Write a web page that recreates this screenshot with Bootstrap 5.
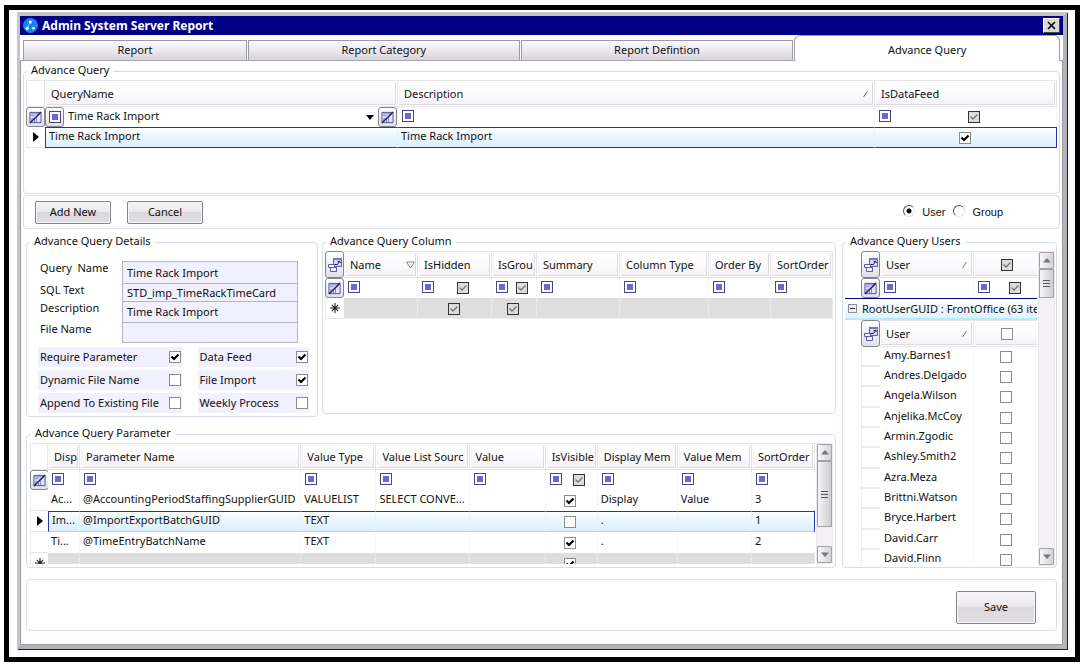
<!DOCTYPE html>
<html lang="en">
<head>
<meta charset="utf-8">
<meta name="viewport" content="width=device-width, initial-scale=1">
<title>Admin System Server Report</title>
<link href="https://cdn.jsdelivr.net/npm/bootstrap@5.3.0/dist/css/bootstrap.min.css" rel="stylesheet">
<style>
:root { --line:#d5deea; --cell:#e6e6e6; --field:#f0f0ff; --navy:#00008b; }
body { font-family:"Noto Sans","Open Sans",sans-serif; font-size:11px; line-height:16px; color:#111; background:#fff; height:100vh; min-height:600px; padding:5px 5px 2px 4px; }
button, input, select { font:inherit; color:inherit; }
.frame { border:5px solid #000; padding:2px 8px 8px 8px; }
.win { border:solid; border-width:4px 4px 4px 3px; border-color:#c6c6ca #b4b4b8 #b4b4b8 #c6c6ca; box-shadow:1px 1px 0 #222, inset 0 0 0 1px #9a9aa2; min-height:0; }
.titlebar { background:#000084; color:#fff; height:19px; font-size:12px; font-weight:700; padding:0 3px; flex:none; }
.closebtn { width:17px; height:15px; background:#dcdad6; border:1px solid; border-color:#fff #444 #444 #fff; line-height:0; padding:0; }
.tabs { height:26px; padding:0 3px; border-bottom:1px solid #a6a6ae; flex:none; background:#fdfcfe; }
.tabs button { height:20px; border:1px solid #9c9ca6; border-bottom:0; background:linear-gradient(#faf8fb,#ece8ee 50%,#d8d4da); padding:0 0 2px; margin-right:1px; }
.tabs .t1 { flex:224 1 0; } .tabs .t2 { flex:272 1 0; } .tabs .t3 { flex:273 1 0; }
.tabs .active { flex:266 1 0; height:26px; background:#fff; border-radius:6px 6px 0 0; padding:2px 0 0; margin:0 0 -1px; align-self:flex-end; }
.client { padding:3px 3px 14px; min-height:0; }
fieldset.box { border:1px solid var(--line); border-radius:4px; min-width:0; }
fieldset.box > legend { float:none; width:auto; font-size:11px; line-height:12px; height:14px; margin:0 0 0 1px; padding:0 4px; }
.bar { border:1px solid var(--line); border-radius:4px; }
.topbox { height:130px; padding:2px 2px 0; flex:none; }
.lower { padding:0 3px; min-height:0; }
.cmd { height:34px; padding:0 8px 0 11px; margin:1px 0 6px; flex:none; }
.pushbtn { border:1px solid #85838a; border-radius:2px; box-shadow:inset 0 0 0 1px #f8f8fa; background:linear-gradient(#f6f4f7,#eceaee 45%,#dbd9de 50%,#e0dee2); width:76px; height:23px; padding:0; line-height:14px; }
.save { width:80px; height:33px; }

/* data grids */
.gt { table-layout:fixed; border-collapse:separate; border-spacing:0; width:100%; }
.gt th, .gt td { padding:0; overflow:hidden; white-space:nowrap; font-weight:400; }
.gt td { border-right:1px dotted #ececec; padding-left:3px; line-height:16px; vertical-align:top; text-overflow:ellipsis; }
.gt thead th { height:27px; border:1px solid var(--cell); border-left:0; padding:1px; background:#fff; }
.gt thead th:first-child { border-left:1px solid var(--cell); }
.hd { height:23px; line-height:21px; padding-left:4px; background:linear-gradient(#fff,#fcfbfd 50%,#f5f2f8); border:1px solid; border-color:#f8f8fa #dedae2 #dedae2 #f4f4f6; overflow:hidden; }
.gt .flt td { height:20px; vertical-align:middle; padding-left:4px; }
.gt .flt .op { margin-bottom:2px; }
.gt .dat td { height:21px; padding-top:1px; }
.gt td.sel, .gt .flt td.sel { padding:0; border:0; border-bottom:1px solid #e4e4e4; border-left:1px solid #ececec; text-align:center; vertical-align:middle; line-height:0; text-overflow:clip; }
.gt .flt td.sel { border:0; }
.gt .cur td:not(.sel) { border-top:1px solid #2438a8; border-bottom:1px solid #2438a8; background:linear-gradient(#fff,#eef8ff 35%,#d9effd); padding-top:0; }
.gt .cur td.sel + td { border-left:1px solid #2438a8; }
.gt .cur td:last-child { border-right:1px solid #2438a8; }
.gt .cur.soft td:not(.sel) { border-bottom-color:#9fd8f6; }
.gt .new td:not(.sel) { background:#dedede; border-right-color:#f4f4f4; border-bottom:1px solid #eee; }
.icobtn { width:19px; height:20px; padding:0; border:1px solid #85858c; border-radius:3px; background:linear-gradient(#fff,#e2e0e6); line-height:0; display:flex; align-items:center; justify-content:center; flex:none; }
.tallbtn { height:27px; }
.gt thead th.corner { padding:0; border:0; }
.op { width:12px; height:12px; border:1px solid #46468c; padding:2px; background:linear-gradient(#6868d6,#6868d6) content-box,#fff; flex:none; display:block; }
.ck { appearance:none; width:12px; height:12px; margin:0; border:1px solid #8c8c8c; background:#fff center/10px 10px no-repeat; display:block; flex:none; border-radius:0; }
.ck:checked { background-image:url("data:image/svg+xml,%3Csvg xmlns='http://www.w3.org/2000/svg' viewBox='0 0 10 10'%3E%3Cpath d='M1.5 4.5 4 7 8.5 2.5' fill='none' stroke='%23000' stroke-width='2.2'/%3E%3C/svg%3E"); }
.ck.mid { border-color:#333; background-color:#dcdcdc; }
.ck.mid:checked { background-image:url("data:image/svg+xml,%3Csvg xmlns='http://www.w3.org/2000/svg' viewBox='0 0 10 10'%3E%3Cpath d='M1.5 4.5 4 7 8.5 2.5' fill='none' stroke='%23777' stroke-width='1.4'/%3E%3C/svg%3E"); }
.combo { appearance:none; border:0; background:transparent; padding:0; outline:0; min-width:0; line-height:16px; height:20px; padding-bottom:3px; }
.cc { display:flex; justify-content:center; align-items:center; height:19px; padding-right:5px; }
.fpair { display:flex; align-items:center; height:18px; }
.fpair .ck { margin:0 auto; }

/* column widths */
.c18{width:18px}.c19{width:19px}.c32{width:32px}.c45{width:45px}.c52{width:52px}.c62{width:62px}.c63{width:63px}.c66{width:66px}.c74{width:74px}.c75{width:75px}.c76{width:76px}.c80{width:80px}.c83{width:83px}.c89{width:89px}.c93{width:93px}.c94{width:94px}.c182{width:182px}.c221{width:221px}.c353{width:353px}.c477{width:477px}

/* details */
.details { width:292px; flex:none; padding:12px 8px 3px 11px; }
fieldset.details > legend { margin-left:-8px; }
.fields { display:grid; grid-template-columns:82px 1fr; grid-template-rows:22px 18px 21px 21px; margin:0 11px 4px 2px; }
.fields label { line-height:14px; }
.fields input { border:1px solid #b4b4c6; border-bottom:0; background:var(--field); padding:0 4px; min-width:0; border-radius:0; width:100%; line-height:14px; }
.fields input:last-child { border-bottom:1px solid #b4b4c6; }
.flags { display:grid; grid-template-columns:143fr 111fr; gap:3px 16px; }
.flags label { background:var(--field); height:20px; line-height:18px; display:flex; align-items:center; justify-content:space-between; padding:0 1px 0 2px; white-space:nowrap; }
.columns { padding:2px; margin-bottom:3px; }
.params { height:141px; padding:2px 2px 1px 3px; margin-top:10px; flex:none; }
.users { width:215px; flex:none; padding:2px 1px 1px 2px; margin-left:6px; }
.clip { overflow:hidden; min-height:0; min-width:0; }
.users .inner { height:100%; min-height:0; }
.params .inner { height:121px; }
.indent { margin-left:16px; }
.grp { border-top:1px solid var(--navy); border-bottom:2px solid #b5eafa; background:linear-gradient(#fff,#dff3fe); height:22px; white-space:nowrap; overflow:hidden; padding-left:3px; }
.grp button { width:9px; height:9px; border:1px solid #8a8aa0; background:#eee; padding:0; line-height:0; flex:none; margin-right:5px; }
.gt.people td { padding-left:4px; }
.gt.people tbody td { height:20px; padding-top:0; }
.gt.people tbody tr:nth-child(3n) td { height:21px; }
.gt.people td.sel { border-bottom:2px solid #ececec; }

/* scroll bars */
.sb { width:17px; flex:none; background:#f4f1f6; border:1px solid #ece8ee; margin-left:1px; }
.sb button { height:17px; width:100%; border:1px solid #a4a2a8; border-radius:1px; background:linear-gradient(90deg,#f8f8f9,#d4d2d6); padding:0; line-height:0; flex:none; display:flex; align-items:center; justify-content:center; }
.sb .thumb { border:1px solid #a4a2a8; background:linear-gradient(90deg,#f4f4f5,#cfcdd2); display:flex; align-items:center; justify-content:center; }
.sb .t65 { height:66px; } .sb .t29 { height:29px; }

.rad { font-family:"Liberation Sans",Arial,sans-serif; }
.rad input { appearance:none; width:12px; height:12px; border-radius:50%; border:1px solid; border-color:#555 #e4e4e4 #e4e4e4 #555; margin:0 7px 2px 0; background:#fff; }
.rad input:checked { background:radial-gradient(circle,#000 2px,#fff 3px); }
.foot { height:52px; margin:11px 3px 0; padding:4px 20px 0 0; flex:none; }
</style>
</head>
<body>
<svg width="0" height="0" class="d-none">
  <symbol id="funnel" viewBox="0 0 14 14"><path d="M1 1.500h12v11H1z" fill="#e4e4fa" stroke="#4c4c9a"/><path d="M2 3h10L8 7v5M2 5h4M3 12V8l3 1v3" fill="none" stroke="#7a7ad2"/><path d="M1 13 13 1" stroke="#22225e" stroke-width="1.500"/></symbol>
  <symbol id="chooser" viewBox="0 0 16 16"><path d="M6.500 1.500h8v8h-8z" fill="#d8d8f4" stroke="#5a5ab0"/><path d="M6 1h9v2H6z" fill="#7272c8"/><path d="M1.500 7.500h6v3h-6zM3.500 10.500h6v4h-6z" fill="#f4f4ff" stroke="#5a5ab0"/><path d="M7.500 7.500h3l2-3M10.500 5l2-1 1 2" fill="none" stroke="#22225e"/></symbol>
  <symbol id="caret" viewBox="0 0 8 8"><path d="M0 2h8L4 7z"/></symbol>
  <symbol id="ptr" viewBox="0 0 6 10"><path d="M0 0l6 5-6 5z"/></symbol>
  <symbol id="star" viewBox="0 0 11 11"><path d="M5.500 0v11M0 5.500h11M2 2l7 7M9 2 2 9" stroke="#222" stroke-width="1.200"/></symbol>
  <symbol id="slash" viewBox="0 0 5 6"><path d="M.5 6 4.500 0" stroke="#777"/></symbol>
  <symbol id="up" viewBox="0 0 8 5"><path d="M0 4.500h8L4 0z" fill="#777"/></symbol>
  <symbol id="down" viewBox="0 0 8 5"><path d="M0 .5h8L4 5z" fill="#777"/></symbol>
  <symbol id="grip" viewBox="0 0 7 9"><path d="M0 1.500h7M0 4.500h7M0 7.500h7" stroke="#555"/></symbol>
</svg>

<div class="frame h-100 d-flex flex-column">
<main class="win flex-fill d-flex flex-column">
  <header class="titlebar d-flex align-items-center">
    <svg width="15" height="15" viewBox="0 0 15 15" class="me-1"><circle cx="7.500" cy="7.500" r="7.500" fill="#1384f4"/><path d="M7 4.500 4.500 10" stroke="#8cc6ff" fill="none"/><circle cx="7.300" cy="4" r="1.500" fill="#fff"/><circle cx="4.200" cy="10.300" r="1.600" fill="#fff"/><circle cx="10.500" cy="10.300" r="1.300" fill="#fff"/></svg>
    <span class="flex-fill">Admin System Server Report</span>
    <button class="closebtn" type="button" aria-label="Close"><svg width="9" height="9" viewBox="0 0 9 9"><path d="M1 1l7 7M8 1 1 8" stroke="#000" stroke-width="1.600"/></svg></button>
  </header>
  <nav class="tabs d-flex align-items-end" role="tablist">
    <button type="button" role="tab" class="t1">Report</button>
    <button type="button" role="tab" class="t2">Report Category</button>
    <button type="button" role="tab" class="t3">Report Defintion</button>
    <button type="button" role="tab" class="active" aria-selected="true">Advance Query</button>
  </nav>

  <div class="client flex-fill d-flex flex-column">
    <fieldset class="box topbox"><legend>Advance Query</legend>
      <table class="gt">
        <colgroup><col class="c19"><col class="c353"><col class="c477"><col class="c182"></colgroup>
        <thead><tr><th></th><th><div class="hd">QueryName</div></th><th><div class="hd d-flex justify-content-between align-items-center pe-1">Description <svg width="5" height="6"><use href="#slash"/></svg></div></th><th><div class="hd">IsDataFeed</div></th></tr></thead>
        <tbody>
        <tr class="flt"><td class="sel"><button class="icobtn" type="button" aria-label="Clear filters"><svg width="13" height="13"><use href="#funnel"/></svg></button></td>
          <td class="p-0"><div class="d-flex align-items-center"><button class="icobtn" type="button" aria-label="Operator"><span class="op m-0"></span></button><select class="combo flex-fill ps-1" aria-label="QueryName filter"><option>Time Rack Import</option></select><svg width="8" height="8" class="me-1"><use href="#caret"/></svg><button class="icobtn" type="button" aria-label="Clear filter"><svg width="13" height="13"><use href="#funnel"/></svg></button></div></td>
          <td><button class="op" type="button" aria-label="Operator"></button></td>
          <td><div class="fpair"><button class="op" type="button" aria-label="Operator"></button><input type="checkbox" class="ck mid" checked aria-label="IsDataFeed filter"></div></td></tr>
        <tr class="dat cur"><td class="sel"><svg width="6" height="10"><use href="#ptr"/></svg></td><td>Time Rack Import</td><td>Time Rack Import</td><td><div class="cc"><input type="checkbox" class="ck" checked aria-label="IsDataFeed"></div></td></tr>
        </tbody>
      </table>
    </fieldset>

    <div class="bar cmd d-flex align-items-center">
      <button class="pushbtn me-3" type="button">Add New</button>
      <button class="pushbtn" type="button">Cancel</button>
      <div class="rad d-flex ms-auto me-5">
        <label class="d-flex align-items-center me-2"><input type="radio" name="who" checked>User</label>
        <label class="d-flex align-items-center"><input type="radio" name="who">Group</label>
      </div>
    </div>

    <div class="lower flex-fill d-flex">
      <div class="flex-fill d-flex flex-column clip">
        <div class="d-flex flex-fill gap-1 clip">
          <fieldset class="box details"><legend>Advance Query Details</legend>
            <div class="fields">
              <label for="qn">Query&nbsp; Name</label><input id="qn" value="Time Rack Import">
              <label for="sq">SQL Text</label><input id="sq" value="STD_imp_TimeRackTimeCard">
              <label for="ds">Description</label><input id="ds" value="Time Rack Import">
              <label for="fn">File Name</label><input id="fn" value="">
            </div>
            <div class="flags">
              <label>Require Parameter <input type="checkbox" class="ck" checked></label>
              <label>Data Feed <input type="checkbox" class="ck" checked></label>
              <label>Dynamic File Name <input type="checkbox" class="ck"></label>
              <label>File Import <input type="checkbox" class="ck" checked></label>
              <label>Append To Existing File <input type="checkbox" class="ck"></label>
              <label>Weekly Process <input type="checkbox" class="ck"></label>
            </div>
          </fieldset>
          <fieldset class="box columns flex-fill"><legend>Advance Query Column</legend>
            <table class="gt">
              <colgroup><col class="c19"><col class="c74"><col class="c74"><col class="c45"><col class="c83"><col class="c89"><col class="c62"><col class="c62"></colgroup>
              <thead><tr><th class="corner"><button class="icobtn tallbtn" type="button" aria-label="Choose columns"><svg width="16" height="16"><use href="#chooser"/></svg></button></th>
                <th><div class="hd d-flex justify-content-between align-items-center">Name <svg width="9" height="8" viewBox="0 0 9 8"><path d="M.5 1h8l-4 6z" fill="none" stroke="#888"/></svg></div></th><th><div class="hd">IsHidden</div></th><th><div class="hd">IsGrou</div></th><th><div class="hd">Summary</div></th><th><div class="hd">Column Type</div></th><th><div class="hd">Order By</div></th><th><div class="hd">SortOrder</div></th></tr></thead>
              <tbody>
              <tr class="flt"><td class="sel"><button class="icobtn" type="button" aria-label="Clear filters"><svg width="13" height="13"><use href="#funnel"/></svg></button></td>
                <td><button class="op" type="button" aria-label="Operator"></button></td>
                <td><div class="fpair"><button class="op" type="button" aria-label="Operator"></button><input type="checkbox" class="ck mid" checked aria-label="IsHidden filter"></div></td>
                <td><div class="fpair"><button class="op" type="button" aria-label="Operator"></button><input type="checkbox" class="ck mid" checked aria-label="IsGroup filter"></div></td>
                <td><button class="op" type="button" aria-label="Operator"></button></td><td><button class="op" type="button" aria-label="Operator"></button></td><td><button class="op" type="button" aria-label="Operator"></button></td><td><button class="op" type="button" aria-label="Operator"></button></td></tr>
              <tr class="dat new"><td class="sel"><svg width="10" height="10"><use href="#star"/></svg></td><td></td><td><div class="cc"><input type="checkbox" class="ck mid" checked aria-label="IsHidden"></div></td><td><div class="cc"><input type="checkbox" class="ck mid" checked aria-label="IsGroup"></div></td><td></td><td></td><td></td><td></td></tr>
              </tbody>
            </table>
          </fieldset>
        </div>

        <fieldset class="box params"><legend>Advance Query Parameter</legend>
          <div class="inner d-flex">
            <div class="clip flex-fill">
            <table class="gt">
              <colgroup><col class="c18"><col class="c32"><col class="c221"><col class="c75"><col class="c93"><col class="c76"><col class="c52"><col class="c80"><col class="c74"><col class="c63"></colgroup>
              <thead><tr><th></th><th><div class="hd">Disp</div></th><th><div class="hd">Parameter Name</div></th><th><div class="hd">Value Type</div></th><th><div class="hd">Value List Sourc</div></th><th><div class="hd">Value</div></th><th><div class="hd">IsVisible</div></th><th><div class="hd">Display Mem</div></th><th><div class="hd">Value Mem</div></th><th><div class="hd">SortOrder</div></th></tr></thead>
              <tbody>
              <tr class="flt"><td class="sel"><button class="icobtn" type="button" aria-label="Clear filters"><svg width="13" height="13"><use href="#funnel"/></svg></button></td>
                <td><button class="op" type="button" aria-label="Operator"></button></td><td><button class="op" type="button" aria-label="Operator"></button></td><td><button class="op" type="button" aria-label="Operator"></button></td><td><button class="op" type="button" aria-label="Operator"></button></td><td><button class="op" type="button" aria-label="Operator"></button></td>
                <td><div class="fpair"><button class="op" type="button" aria-label="Operator"></button><input type="checkbox" class="ck mid" checked aria-label="IsVisible filter"></div></td>
                <td><button class="op" type="button" aria-label="Operator"></button></td><td><button class="op" type="button" aria-label="Operator"></button></td><td><button class="op" type="button" aria-label="Operator"></button></td></tr>
              <tr class="dat"><td class="sel"></td><td>Ac...</td><td>@AccountingPeriodStaffingSupplierGUID</td><td>VALUELIST</td><td>SELECT CONVE...</td><td></td><td><div class="cc"><input type="checkbox" class="ck" checked aria-label="IsVisible"></div></td><td>Display</td><td>Value</td><td>3</td></tr>
              <tr class="dat cur soft"><td class="sel"><svg width="6" height="10"><use href="#ptr"/></svg></td><td>Im...</td><td>@ImportExportBatchGUID</td><td>TEXT</td><td></td><td></td><td><div class="cc"><input type="checkbox" class="ck" aria-label="IsVisible"></div></td><td>.</td><td></td><td>1</td></tr>
              <tr class="dat"><td class="sel"></td><td>Ti...</td><td>@TimeEntryBatchName</td><td>TEXT</td><td></td><td></td><td><div class="cc"><input type="checkbox" class="ck" checked aria-label="IsVisible"></div></td><td>.</td><td></td><td>2</td></tr>
              <tr class="dat new"><td class="sel"><svg width="10" height="10"><use href="#star"/></svg></td><td></td><td></td><td></td><td></td><td></td><td><div class="cc"><input type="checkbox" class="ck" checked aria-label="IsVisible"></div></td><td></td><td></td><td></td></tr>
              </tbody>
            </table>
            </div>
            <div class="sb d-flex flex-column"><button type="button" aria-label="Scroll up"><svg width="8" height="5"><use href="#up"/></svg></button><div class="thumb t65"><svg width="7" height="9"><use href="#grip"/></svg></div><button type="button" class="mt-auto" aria-label="Scroll down"><svg width="8" height="5"><use href="#down"/></svg></button></div>
          </div>
        </fieldset>
      </div>

      <fieldset class="box users"><legend>Advance Query Users</legend>
        <div class="inner d-flex">
          <div class="clip flex-fill">
            <div class="indent"><table class="gt">
              <colgroup><col class="c19"><col class="c94"><col class="c66"></colgroup>
              <thead><tr><th class="corner"><button class="icobtn tallbtn" type="button" aria-label="Choose columns"><svg width="16" height="16"><use href="#chooser"/></svg></button></th><th><div class="hd d-flex justify-content-between align-items-center pe-1">User <svg width="5" height="6"><use href="#slash"/></svg></div></th><th><div class="hd d-flex justify-content-center align-items-center"><input type="checkbox" class="ck mid me-1" checked aria-label="All users"></div></th></tr></thead>
              <tbody><tr class="flt"><td class="sel"><button class="icobtn" type="button" aria-label="Clear filters"><svg width="13" height="13"><use href="#funnel"/></svg></button></td><td><button class="op" type="button" aria-label="Operator"></button></td><td><div class="fpair"><button class="op" type="button" aria-label="Operator"></button><input type="checkbox" class="ck mid" checked aria-label="Selected filter"></div></td></tr></tbody>
            </table></div>
            <div class="grp d-flex align-items-center"><button type="button" aria-label="Collapse"><svg width="5" height="7" viewBox="0 0 5 7"><path d="M0 3.500h5" stroke="#333"/></svg></button>RootUserGUID : FrontOffice (63 ite</div>
            <div class="indent"><table class="gt people">
              <colgroup><col class="c19"><col class="c94"><col class="c66"></colgroup>
              <thead><tr><th class="corner"><button class="icobtn tallbtn" type="button" aria-label="Choose columns"><svg width="16" height="16"><use href="#chooser"/></svg></button></th><th><div class="hd d-flex justify-content-between align-items-center pe-1">User <svg width="5" height="6"><use href="#slash"/></svg></div></th><th><div class="hd d-flex justify-content-center align-items-center"><input type="checkbox" class="ck me-1" aria-label="All in group"></div></th></tr></thead>
              <tbody>
              <tr><td class="sel"></td><td>Amy.Barnes1</td><td><div class="cc"><input type="checkbox" class="ck" aria-label="Amy.Barnes1"></div></td></tr>
              <tr><td class="sel"></td><td>Andres.Delgado</td><td><div class="cc"><input type="checkbox" class="ck" aria-label="Andres.Delgado"></div></td></tr>
              <tr><td class="sel"></td><td>Angela.Wilson</td><td><div class="cc"><input type="checkbox" class="ck" aria-label="Angela.Wilson"></div></td></tr>
              <tr><td class="sel"></td><td>Anjelika.McCoy</td><td><div class="cc"><input type="checkbox" class="ck" aria-label="Anjelika.McCoy"></div></td></tr>
              <tr><td class="sel"></td><td>Armin.Zgodic</td><td><div class="cc"><input type="checkbox" class="ck" aria-label="Armin.Zgodic"></div></td></tr>
              <tr><td class="sel"></td><td>Ashley.Smith2</td><td><div class="cc"><input type="checkbox" class="ck" aria-label="Ashley.Smith2"></div></td></tr>
              <tr><td class="sel"></td><td>Azra.Meza</td><td><div class="cc"><input type="checkbox" class="ck" aria-label="Azra.Meza"></div></td></tr>
              <tr><td class="sel"></td><td>Brittni.Watson</td><td><div class="cc"><input type="checkbox" class="ck" aria-label="Brittni.Watson"></div></td></tr>
              <tr><td class="sel"></td><td>Bryce.Harbert</td><td><div class="cc"><input type="checkbox" class="ck" aria-label="Bryce.Harbert"></div></td></tr>
              <tr><td class="sel"></td><td>David.Carr</td><td><div class="cc"><input type="checkbox" class="ck" aria-label="David.Carr"></div></td></tr>
              <tr><td class="sel"></td><td>David.Flinn</td><td><div class="cc"><input type="checkbox" class="ck" aria-label="David.Flinn"></div></td></tr>
              </tbody>
            </table></div>
          </div>
          <div class="sb d-flex flex-column"><button type="button" aria-label="Scroll up"><svg width="8" height="5"><use href="#up"/></svg></button><div class="thumb t29"><svg width="7" height="9"><use href="#grip"/></svg></div><button type="button" class="mt-auto" aria-label="Scroll down"><svg width="8" height="5"><use href="#down"/></svg></button></div>
        </div>
      </fieldset>
    </div>

    <div class="bar foot d-flex align-items-center justify-content-end"><button class="pushbtn save" type="button">Save</button></div>
  </div>
</main>
</div>
<script src="https://cdn.jsdelivr.net/npm/bootstrap@5.3.0/dist/js/bootstrap.bundle.min.js"></script>
</body>
</html>
